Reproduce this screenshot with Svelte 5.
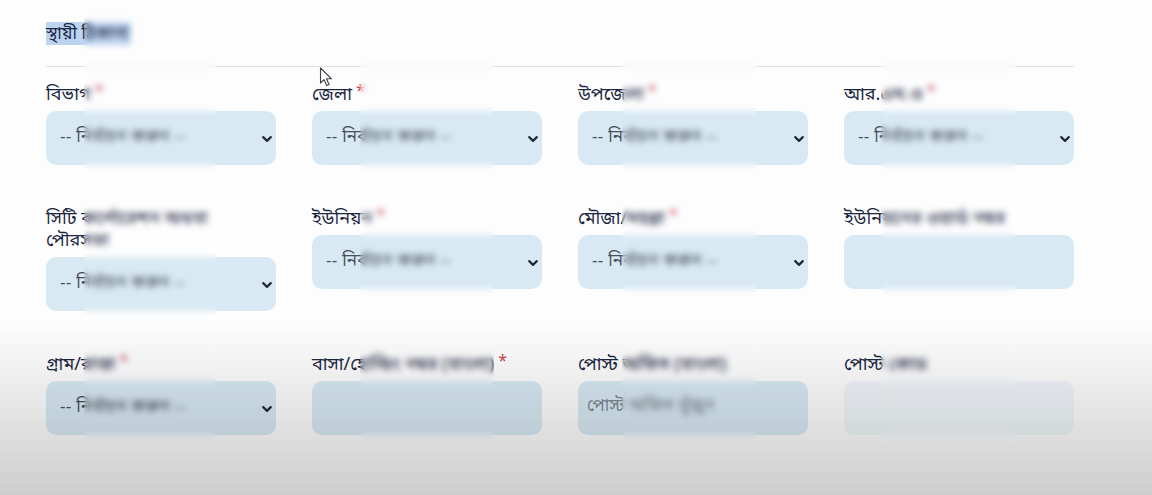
<script lang="ts">
	interface Field {
		label: string;
		required?: boolean;
		kind: 'select' | 'input' | 'disabled';
		placeholder?: string;
	}

	const fields: Field[] = [
		{label: 'বিভাগ', required: true, kind: 'select'},
		{label: 'জেলা', required: true, kind: 'select'},
		{label: 'উপজেলা', required: true, kind: 'select'},
		{label: 'আর.এম.ও', required: true, kind: 'select'},
		{label: 'সিটি কর্পোরেশন অথবা\nপৌরসভা', kind: 'select'},
		{label: 'ইউনিয়ন', required: true, kind: 'select'},
		{label: 'মৌজা/মহল্লা', required: true, kind: 'select'},
		{label: 'ইউনিয়নের ওয়ার্ড নম্বর', kind: 'input'},
		{label: 'গ্রাম/রাস্তা', required: true, kind: 'select'},
		{label: 'বাসা/হোল্ডিং নম্বর (বাংলা)', required: true, kind: 'input'},
		{label: 'পোস্ট অফিস (বাংলা)', kind: 'input', placeholder: 'পোস্ট অফিস খুঁজুন'},
		{label: 'পোস্ট কোড', kind: 'disabled'}
	];
</script>

<div class="page">
	<h2><span class="selected">স্থায়ী ঠিকানা</span></h2>
	<hr />
	<div class="grid">
		{#each fields as field}
			<div class="field">
				<div class="label">{field.label}{#if field.required}<span class="req">*</span>{/if}</div>
				<div class="control {field.kind}">
					{#if field.kind === 'select'}
						<span class="value">-- নির্বাচন করুন --</span>
						<svg class="chevron" viewBox="0 0 16 16" width="10" height="10">
							<path d="m2 5 6 6 6-6" fill="none" stroke="#1f2a36" stroke-width="3.4" stroke-linecap="round" stroke-linejoin="round" />
						</svg>
					{:else if field.placeholder}
						<span class="hint">{field.placeholder}</span>
					{/if}
				</div>
			</div>
		{/each}
	</div>

	<!-- privacy blur strips over each column -->
	<div class="strip s1"></div>
	<div class="strip s2"></div>
	<div class="strip s3"></div>
	<div class="strip s4"></div>

	<svg class="cursor" viewBox="0 0 14 20" width="14" height="20">
		<path d="M1.5 1v15l3.6-3.4 2.6 6 2.4-1-2.6-5.8h5z" fill="#fff" stroke="#3a4048" stroke-width="1.1" stroke-linejoin="round" />
	</svg>

	<div class="shade"></div>
</div>

<style>
	:global(body) {
		margin: 0;
		background: #fdfdfe;
	}
	.page {
		position: relative;
		width: 1152px;
		height: 495px;
		overflow: hidden;
		box-sizing: border-box;
		padding: 22px 78px 0 46px;
		font-family: 'Noto Sans Bengali', 'Noto Sans', 'Liberation Serif', sans-serif;
		color: #1b2740;
	}
	h2 {
		margin: 0;
		height: 23px;
		font-size: 17px;
		font-weight: 400;
	}
	.selected {
		background: #bcd3f2;
		display: inline-block;
		box-sizing: border-box;
		height: 23px;
		padding-top: 2px;
		line-height: 21px;
		width: 85px;
		white-space: nowrap;
	}
	hr {
		margin: 21px 0 15px;
		border: 0;
		border-top: 1px solid #dfe0e3;
	}
	.grid {
		display: grid;
		grid-template-columns: repeat(4, 230px);
		column-gap: 36px;
		row-gap: 41px;
		align-items: start;
	}
	.label {
		font-size: 18px;
		line-height: 22px;
		height: auto;
		padding-top: 2px;
		margin-bottom: 5px;
		white-space: pre-line;
	}
	.req {
		color: #c9434a;
		font-size: 16px;
		line-height: 0;
		margin-left: 4px;
		display: inline-block;
		transform: translateY(-4px);
	}
	.control {
		height: 54px;
		box-sizing: border-box;
		border-radius: 10px;
		background: #d8e9f3;
		display: flex;
		align-items: center;
		justify-content: space-between;
		padding: 0 4px 0 14px;
		font-size: 17px;
	}
	.control.disabled {
		background: #f0f5f9;
	}
	.value {
		color: #47505a;
		margin-top: -2px;
		letter-spacing: 0.3px;
	}
	.hint {
		color: #7b8790;
		margin: -3px 0 0 -5px;
	}
	.chevron {
		margin-top: 2px;
	}
	.strip {
		position: absolute;
		top: 0;
		height: 446px;
		backdrop-filter: blur(3px);
	}
	.s1 {
		left: 84px;
		width: 132px;
	}
	.s2 {
		left: 360px;
		width: 134px;
	}
	.s3 {
		left: 622px;
		width: 135px;
	}
	.s4 {
		left: 881px;
		width: 135px;
	}
	.cursor {
		position: absolute;
		left: 319px;
		top: 67px;
	}
	.shade {
		position: absolute;
		inset: 0;
		pointer-events: none;
		background: linear-gradient(to bottom, rgba(0, 0, 0, 0) 320px, rgba(0, 0, 0, 0.05) 370px, rgba(0, 0, 0, 0.12) 435px, rgba(0, 0, 0, 0.19) 495px);
	}
</style>
